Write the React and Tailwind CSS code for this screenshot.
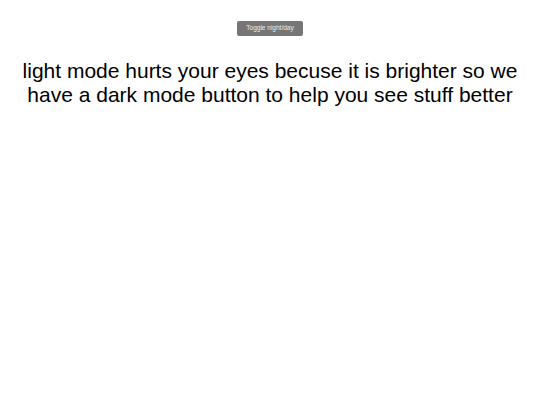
import React, { useState } from "react";

const App = () => {
  const [dark, setDark] = useState(false);

  return (
    <div
      className={`min-h-[405px] w-full font-['Liberation_Sans',Arial,sans-serif] ${
        dark ? "bg-[#111] text-white" : "bg-white text-black"
      }`}
    >
      <div className="flex justify-center pt-[21px]">
        <button
          onClick={() => setDark(!dark)}
          className="h-[15px] px-[9.5px] rounded-[2px] bg-[#767676] text-[#ececec] text-[6.5px] leading-none"
        >
          Toggle night/day
        </button>
      </div>
      <h1 className="mt-[23px] px-4 text-center text-[21px] leading-[24px] font-normal">
        light mode hurts your eyes becuse it is brighter so we have a dark mode
        button to help you see stuff better
      </h1>
    </div>
  );
};

export default App;
